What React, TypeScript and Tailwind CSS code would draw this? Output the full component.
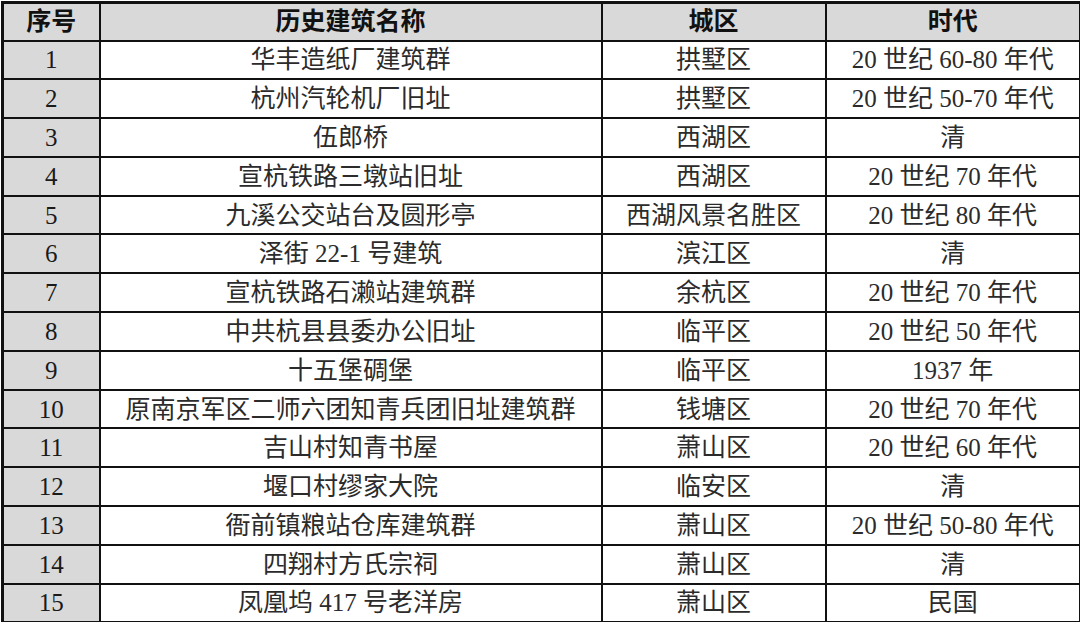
const rows: [string, string, string][] = [
  ["华丰造纸厂建筑群", "拱墅区", "20 世纪 60-80 年代"],
  ["杭州汽轮机厂旧址", "拱墅区", "20 世纪 50-70 年代"],
  ["伍郎桥", "西湖区", "清"],
  ["宣杭铁路三墩站旧址", "西湖区", "20 世纪 70 年代"],
  ["九溪公交站台及圆形亭", "西湖风景名胜区", "20 世纪 80 年代"],
  ["泽街 22-1 号建筑", "滨江区", "清"],
  ["宣杭铁路石濑站建筑群", "余杭区", "20 世纪 70 年代"],
  ["中共杭县县委办公旧址", "临平区", "20 世纪 50 年代"],
  ["十五堡碉堡", "临平区", "1937 年"],
  ["原南京军区二师六团知青兵团旧址建筑群", "钱塘区", "20 世纪 70 年代"],
  ["吉山村知青书屋", "萧山区", "20 世纪 60 年代"],
  ["堰口村缪家大院", "临安区", "清"],
  ["衙前镇粮站仓库建筑群", "萧山区", "20 世纪 50-80 年代"],
  ["四翔村方氏宗祠", "萧山区", "清"],
  ["凤凰坞 417 号老洋房", "萧山区", "民国"],
];

export default function App() {
  return (
    <div className="w-[1080px] h-[622px] bg-white overflow-hidden font-['Liberation_Serif','Noto_Sans_CJK_SC',serif]">
      <table className="table-fixed border-collapse w-[1078px] ml-px mt-px border-[3px] border-[#111] text-[#2b2b2b] text-[25px] leading-none">
        <colgroup>
          <col className="w-[97px]" />
          <col className="w-[502px]" />
          <col className="w-[224px]" />
          <col className="w-[255px]" />
        </colgroup>
        <thead>
          <tr className="h-[38px] bg-[#d9d9d9] font-bold text-[#111]">
            <th className="border-2 border-[#111]">序号</th>
            <th className="border-2 border-[#111]">历史建筑名称</th>
            <th className="border-2 border-[#111]">城区</th>
            <th className="border-2 border-[#111]">时代</th>
          </tr>
        </thead>
        <tbody>
          {rows.map(([name, area, era], i) => (
            <tr key={i} className="h-[38.8px]">
              <td className="border-2 border-[#111] bg-[#d9d9d9] text-center text-[#1a1a1a]">{i + 1}</td>
              <td className="border-2 border-[#111] text-center">{name}</td>
              <td className="border-2 border-[#111] text-center">{area}</td>
              <td className="border-2 border-[#111] text-center">{era}</td>
            </tr>
          ))}
        </tbody>
      </table>
    </div>
  );
}
